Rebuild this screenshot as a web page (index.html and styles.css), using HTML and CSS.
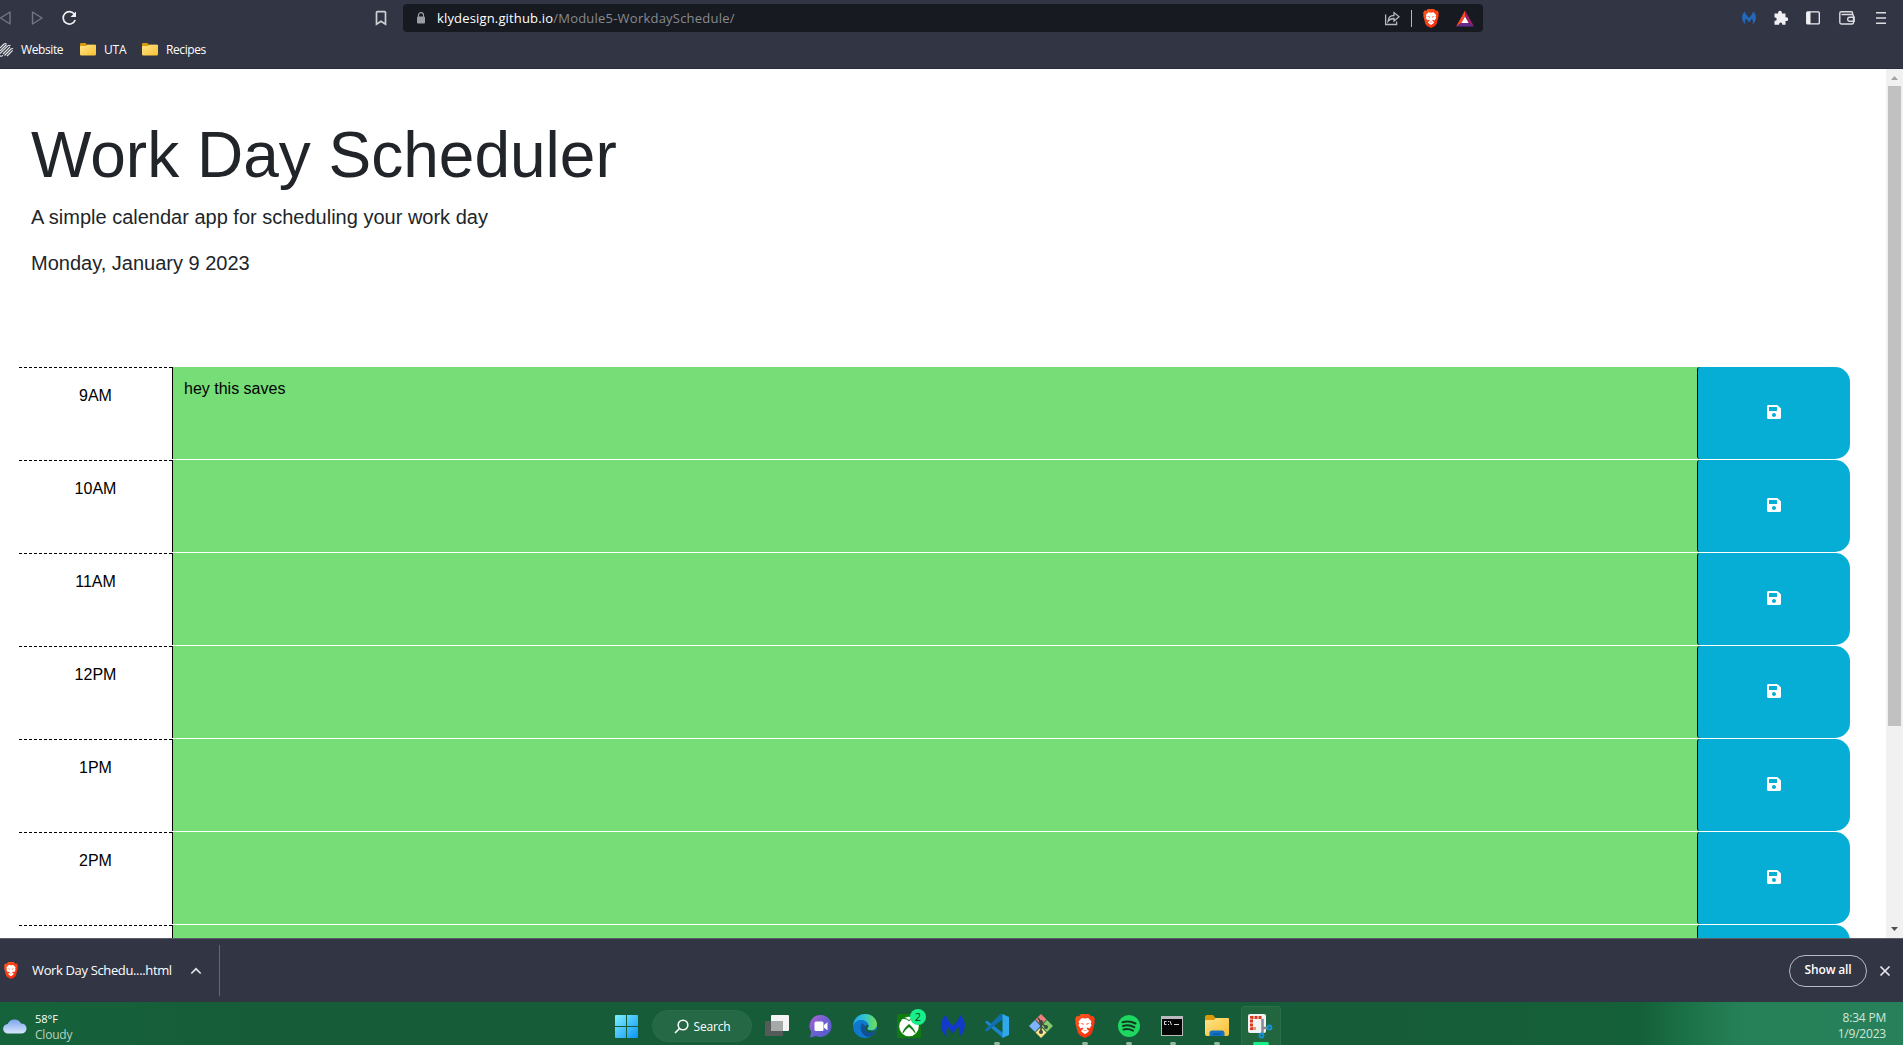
FILE: index.html
```html
<!DOCTYPE html>
<html lang="en">
<head>
<meta charset="utf-8">
<title>Work Day Scheduler</title>
<link rel="stylesheet" href="styles.css">
</head>
<body>
<svg class="defs" width="0" height="0" aria-hidden="true">
  <defs>
    <linearGradient id="win" x1="0" y1="0" x2="1" y2="1"><stop offset="0" stop-color="#7ff0ff"/><stop offset="1" stop-color="#0b93f5"/></linearGradient>
    <linearGradient id="fold" x1="0" y1="0" x2="1" y2="1"><stop offset="0" stop-color="#ffe38a"/><stop offset="1" stop-color="#f9c02f"/></linearGradient>
    <linearGradient id="cloud" x1="0" y1="0" x2="0" y2="1"><stop offset="0" stop-color="#7ba5ee"/><stop offset="1" stop-color="#d9e6fb"/></linearGradient>
    <linearGradient id="chat" x1="0" y1="0" x2="1" y2="1"><stop offset="0" stop-color="#b065cf"/><stop offset=".5" stop-color="#6d60d3"/><stop offset="1" stop-color="#5059c9"/></linearGradient>
    <linearGradient id="edge" x1="0" y1="0" x2="1" y2="0"><stop offset="0" stop-color="#1fa5e8"/><stop offset=".5" stop-color="#35c4cf"/><stop offset="1" stop-color="#73e04a"/></linearGradient>
    <linearGradient id="brv" x1="0" y1="0" x2="1" y2="1"><stop offset="0" stop-color="#ff5a1f"/><stop offset="1" stop-color="#f5260b"/></linearGradient>
  </defs>
  <symbol id="brave" viewBox="0 0 20 24">
    <path fill="url(#brv)" d="M6 0h8l2 2.200 2.200-.2L20 5l-.7 2 .5 1.500-2.800 10.500L15 21.500 10 24l-5-2.500L3 19 .2 8.500.7 7 0 5l1.800-3L4 2.200z"/>
    <path fill="#fff" d="M6.800 4l3.200.6 3.200-.6 3.300 3.500-.7 2.300.8 1.200-2 3.400-2.100-.8-1 1.200 2.300 1.600-.3 1.300L10 20.200l-3.500-2.500-.3-1.300 2.300-1.600-1-1.200-2.100.8L3.400 11l.8-1.200-.7-2.300z"/>
    <path fill="#ff4a15" d="M5.200 8.800l3.600.9-.5 1.200zM14.800 8.800l-3.600.9.500 1.200zM7.600 17l2.400-1.100 2.400 1.100-2.400-.3z"/>
  </symbol>
  <symbol id="em" viewBox="0 0 24 24">
    <path d="M5 1C1.500 3.500-.3 8 .2 13c.5 4.200 2.600 7.700 5.800 9.800C4.800 19.500 5 16 6.800 12.800c1.700 2 3.400 4.200 5.200 6.700 1.800-2.500 3.500-4.700 5.200-6.700 1.800 3.200 2 6.700.8 10 3.200-2.100 5.300-5.600 5.800-9.800.5-5-1.300-9.500-4.800-12-.8 3.800-3.800 8-7 10.800C8.800 9 5.800 4.800 5 1z"/>
  </symbol>
  <symbol id="folder" viewBox="0 0 24 22">
    <path fill="#d99a0b" d="M0 2q0-2 2-2h6l2.500 3H22q2 0 2 2v3H0z"/>
    <path fill="url(#fold)" d="M0 6q0-1 1-1h8l2-2h12q1 0 1 1v15q0 2-2 2H2q-2 0-2-2z"/>
  </symbol>
  <symbol id="save" viewBox="0 0 448 512">
    <path fill="#fff" d="M433.941 129.941l-83.882-83.882A48 48 0 0 0 316.118 32H48C21.490 32 0 53.490 0 80v352c0 26.510 21.490 48 48 48h352c26.510 0 48-21.490 48-48V163.882a48 48 0 0 0-14.059-33.941zM224 416c-35.346 0-64-28.654-64-64s28.654-64 64-64 64 28.654 64 64-28.654 64-64 64zm96-304.520V212c0 6.627-5.373 12-12 12H76c-6.627 0-12-5.373-12-12V108c0-6.627 5.373-12 12-12h228.520c3.183 0 6.235 1.264 8.485 3.515l3.480 3.480A11.996 11.996 0 0 1 320 111.480z"/>
  </symbol>
</svg>

<header class="chrome">
  <div class="toolbar">
    <div class="nav">
      <svg width="12" height="16" viewBox="0 0 12 16" fill="none" stroke="#737784" stroke-width="1.400" stroke-linejoin="round"><path d="M10 2v12L.5 8z"/></svg>
      <svg width="12" height="16" viewBox="0 0 12 16" fill="none" stroke="#737784" stroke-width="1.400" stroke-linejoin="round"><path d="M1.500 2v12L11 8z"/></svg>
      <svg width="16" height="16" viewBox="0 0 16 16" fill="none" stroke="#f0f0f2" stroke-width="1.700"><path d="M12.500 4.300A6.200 6.200 0 1 0 13.200 10"/><path fill="#f0f0f2" stroke="none" d="M14 1.500V7H8.500z"/></svg>
    </div>
    <svg class="mark" width="12" height="16" viewBox="0 0 12 16" fill="none" stroke="#cfd0d4" stroke-width="1.700"><path d="M1.500 2.500q0-.8.800-.8h7.400q.8 0 .8.800v11.600L6 11.300l-4.500 2.800z"/></svg>
    <div class="address">
      <svg width="10" height="12" viewBox="0 0 10 12"><rect x="1" y="4.500" width="8" height="7" rx="1" fill="#9a9ca6"/><path d="M2.500 5V3a2.500 2.300 0 0 1 5 0v2" fill="none" stroke="#9a9ca6" stroke-width="1.200"/></svg>
      <div class="url"><b>klydesign.github.io</b>/Module5-WorkdaySchedule/</div>
      <div class="address-tools">
        <svg width="17" height="16" viewBox="0 0 17 16" fill="none" stroke="#b5b7bd" stroke-width="1.300"><path d="M1.600 4.500v10h11v-3M4 11.500c.2-4.200 2.500-6 6-6V2.600l5 4.200-5 4.200V8.500c-2.800 0-4.500.8-6 3z"/></svg>
        <i class="rule"></i>
        <svg width="16" height="19"><use href="#brave"/></svg>
        <svg class="bat" width="18" height="17" viewBox="0 0 18 17"><path fill="#ff4724" d="M9 .5v6L5.500 13 0 16.500z"/><path fill="#9e1f63" d="M9 .5l9 16-5.500-3.500L9 6.500z"/><path fill="#662d91" d="M0 16.500L5.500 13h7l5.500 3.500z"/><path fill="#fff" d="M9 6.500l3.600 6.500H5.400z"/></svg>
      </div>
    </div>
    <div class="extensions">
      <svg width="14" height="14" fill="#2069bd"><use href="#em"/></svg>
      <svg width="16" height="16" viewBox="0 0 16 16" fill="#f0f0f2"><path d="M1.500 3.500h3.600V2.700a1.900 1.900 0 0 1 3.800 0v.8h3.600v3.800h.8a1.900 1.900 0 0 1 0 3.800h-.8v3.700H9.200v-.9a1.500 1.500 0 0 0-3 0v.9H1.500v-4h.6a1.600 1.600 0 0 0 0-3.200h-.6z"/></svg>
      <svg width="14" height="14" viewBox="0 0 14 14"><rect x=".7" y=".9" width="12.600" height="12" rx="1" fill="none" stroke="#f0f0f2" stroke-width="1.300"/><path fill="#f0f0f2" d="M1 1h3.500v12H1z"/></svg>
      <svg width="16" height="14" viewBox="0 0 16 14" fill="none" stroke="#dcdde0" stroke-width="1.400"><path d="M13.500 3.500V2q0-1.200-1.200-1.200H2.300Q.8.800.8 2.300v9Q.8 13 2.300 13h10.500q1.700 0 1.700-1.500V5q0-1.500-1.500-1.500H2.500M15.200 6.300h-4.500a2 2 0 0 0 0 4h4.500z"/></svg>
      <svg width="10" height="14" viewBox="0 0 10 14" stroke="#dcdde0" stroke-width="1.600"><path d="M0 1.800h10M0 7h10M0 12.200h10"/></svg>
    </div>
  </div>
  <nav class="bookmarks">
    <svg class="squarespace" width="14" height="14" viewBox="0 0 14 14" fill="none" stroke="#e7e7ea" stroke-width="1.100"><path d="M0 5l4-4q1.500-1 2.500.2M0 8l6.500-6.500M0 10.500L8 2.700q1.500-1 2.500 0M3 11l7-7.200M4.500 12.500L11 6q1.200-1 2 0M7 13l5.700-5.700M0 12.800q1.500 1 3-.5"/></svg>
    <span class="bm-web">Website</span>
    <svg width="16" height="13" viewBox="0 0 24 22" preserveAspectRatio="none"><use href="#folder"/></svg>
    <span class="bm-uta">UTA</span>
    <svg width="16" height="13" viewBox="0 0 24 22" preserveAspectRatio="none"><use href="#folder"/></svg>
    <span class="bm-rec">Recipes</span>
  </nav>
</header>

<div class="viewport">
  <main class="page">
    <header class="intro">
      <h1>Work Day Scheduler</h1>
      <p>A simple calendar app for scheduling your work day</p>
      <p>Monday, January 9 2023</p>
    </header>
    <section class="blocks">
      <div class="block"><div class="hour">9AM</div><div class="note">hey this saves</div><button class="save"><svg width="14" height="16"><use href="#save"/></svg></button></div>
      <div class="block"><div class="hour">10AM</div><div class="note"></div><button class="save"><svg width="14" height="16"><use href="#save"/></svg></button></div>
      <div class="block"><div class="hour">11AM</div><div class="note"></div><button class="save"><svg width="14" height="16"><use href="#save"/></svg></button></div>
      <div class="block"><div class="hour">12PM</div><div class="note"></div><button class="save"><svg width="14" height="16"><use href="#save"/></svg></button></div>
      <div class="block"><div class="hour">1PM</div><div class="note"></div><button class="save"><svg width="14" height="16"><use href="#save"/></svg></button></div>
      <div class="block"><div class="hour">2PM</div><div class="note"></div><button class="save"><svg width="14" height="16"><use href="#save"/></svg></button></div>
      <div class="block"><div class="hour"></div><div class="note"></div><button class="save"></button></div>
    </section>
  </main>
  <div class="scrollbar">
    <svg width="17" height="17" viewBox="0 0 17 17"><path fill="#a3a3a3" d="M5 11h7L8.500 7z"/></svg>
    <div class="thumb"></div>
    <svg width="17" height="17" viewBox="0 0 17 17"><path fill="#505050" d="M5 6h7l-3.500 4z"/></svg>
  </div>
</div>

<div class="downloads">
  <svg class="dl-icon" width="14" height="17"><use href="#brave"/></svg>
  <span class="dl-name">Work Day Schedu....html</span>
  <svg width="12" height="8" viewBox="0 0 12 8" fill="none" stroke="#dedfe2" stroke-width="1.700"><path d="M1.300 6.500L6 1.800l4.700 4.700"/></svg>
  <i class="dl-rule"></i>
  <button class="show-all">Show all</button>
  <svg class="close" width="12" height="12" viewBox="0 0 12 12" stroke="#e8e8ea" stroke-width="1.700"><path d="M1.500 1.500l9 9M10.500 1.500l-9 9"/></svg>
</div>

<footer class="taskbar">
  <div class="weather">
    <svg width="24" height="16" viewBox="0 0 24 16"><path fill="url(#cloud)" d="M5 15.500a4.700 4.700 0 0 1-.3-9.400A7.300 7.300 0 0 1 18 5.500a5 5 0 0 1 1 10z"/></svg>
    <div><div class="temp">58°F</div><div class="sky">Cloudy</div></div>
  </div>
  <div class="apps">
    <svg class="start" width="23" height="23" viewBox="0 0 23 23" fill="url(#win)"><path d="M0 1q0-1 1-1h10v11H0zM12 0h10q1 0 1 1v10H12zM0 12h11v11H1q-1 0-1-1zM12 12h11v10q0 1-1 1H12z"/></svg>
    <div class="search"><svg width="15" height="15" viewBox="0 0 15 15" fill="none" stroke="#fff" stroke-width="1.600"><circle cx="9" cy="6" r="4.800"/><path d="M5.500 9.500L1 14"/></svg><span>Search</span></div>
    <div class="app"><svg width="24" height="22" viewBox="0 0 24 22"><path fill="#f4f4f4" d="M7 0h16q1 0 1 1v14q0 1-1 1H6V1q0-1 1-1z"/><path fill="#555b58" d="M0 7q0-1 1-1h17v14q0 1-1 1H1q-1 0-1-1z"/><path fill="#a5a9a7" d="M6 6h12v10H6z"/></svg></div>
    <div class="app"><svg width="24" height="24" viewBox="0 0 24 24"><path fill="url(#chat)" d="M12 1a11 11 0 1 1-5 21L1 23.500 2.300 18A11 11 0 0 1 12 1z"/><rect x="5.500" y="7.500" width="9" height="9.500" rx="1.500" fill="#fff"/><path fill="#fff" d="M15 11l3.500-2.700v8L15 13.700z"/></svg></div>
    <div class="app"><svg width="24" height="24" viewBox="0 0 24 24"><circle cx="12" cy="12" r="12" fill="#0e78ce"/><path fill="#124f95" d="M9 9c-3 5-1 12 6 14 4-.5 7-3 8-6-4 2-11 1-11-5z"/><path fill="url(#edge)" d="M0 11.500C1 4 6 0 12 0c7 0 12 5 12 10.500 0 5-6 7-9.500 5-1-.8 1-1.500 1-4C15.500 8 11.500 6 8 6c-4 0-6.500 2.500-8 5.500z"/><path fill="#165c39" d="M15.500 11.500c0 1.800-1.300 2.700-1.200 3.500 1 1.800 5.700 2.300 8.700.8l-.8 1.800c-4 2.200-11.500 1-10-5.200.8-1.800 2.700-2.300 3.300-.9z"/></svg></div>
    <div class="app"><svg width="24" height="24" viewBox="0 0 24 24"><rect width="24" height="24" rx="1" fill="#107c10"/><circle cx="12" cy="12.500" r="9.800" fill="#fff"/><path fill="#107c10" d="M5 4q3-1 7 2 4-3 7-2l-2 1q-3 0-5 2.200Q10 5 7 5zM12 10c3 2.500 7 7 6.500 10Q16 16 12 13q-4 3-6.500 7C5 17 9 12.500 12 10z"/></svg><b class="badge">2</b></div>
    <div class="app"><svg width="24" height="24" fill="#1239c9"><use href="#em"/></svg></div>
    <div class="app run"><svg width="24" height="24" viewBox="0 0 24 24"><path fill="#1173b8" d="M17.500 0l-13 13.500L.5 17 0 16 15.500 0z"/><path fill="#1b84cd" d="M0 8l2-1.500L18 19v5L0 8.500z"/><path fill="#0f6fb5" d="M0 16l1.800 1.500L18 5V0z"/><path fill="#2fa8ee" d="M17.500 0L24 3v18l-6.500 3z"/></svg></div>
    <div class="app"><svg width="24" height="24" viewBox="0 0 24 24"><path fill="#ef7f7d" d="M12 0l5.500 5.500L12 11 6.500 5.500z"/><path fill="#80b3ff" d="M6 6l5.500 6L6 18l-6-6z"/><path fill="#87c96b" d="M18 6l6 6-6 6-5.500-6z"/><path fill="#ffe08a" d="M12 13l5.500 5.500L12 24l-5.500-5.500z"/><path fill="none" stroke="#3d4b43" stroke-width="1.600" d="M9 4l3 4v11M12 9l5 4"/><g fill="#3d4b43"><circle cx="12" cy="8" r="2"/><circle cx="17" cy="13" r="2"/><circle cx="12" cy="18" r="2"/></g></svg></div>
    <div class="app run"><svg width="20" height="24"><use href="#brave"/></svg></div>
    <div class="app run"><svg width="22" height="22" viewBox="0 0 22 22"><circle cx="11" cy="11" r="11" fill="#1ed760"/><path fill="none" stroke="#123820" stroke-linecap="round" stroke-width="2" d="M4.500 7.300q7-2 13 1.200M5 11q6-1.700 11.300 1.200M5.500 14.500q5-1.300 9.500 1.100"/></svg></div>
    <div class="app run"><svg class="cmd" width="22" height="20" viewBox="0 0 22 20"><rect width="22" height="20" fill="#b8babd"/><rect x="1" y="3" width="20" height="16" fill="#050505"/><path stroke="#ddd" fill="none" d="M5.500 5.500H3.500v3h2M7.500 5v1M7.500 8v1M9 5l1.500 4M13 8.500h5"/></svg></div>
    <div class="app run"><svg width="24" height="22" viewBox="0 0 24 22"><use href="#folder"/><path fill="#1272c4" d="M4.500 21v-3q0-2.500 2.500-2.500h10q2.500 0 2.500 2.500v3z"/><path fill="#0a559f" d="M8 18.500h8v1.200H8z"/></svg></div>
    <div class="app active"><svg width="24" height="24" viewBox="0 0 24 24"><rect width="18" height="19" rx="2" fill="#f2f3f5"/><path fill="none" stroke="#d83b1c" stroke-width="3" stroke-dasharray="3 1" d="M13.500 3.500H3.500v11h4"/><path fill="none" stroke="#868b93" stroke-width="2.500" d="M14.500 5v9h5M14.500 14v5"/><g fill="none" stroke="#1592dc" stroke-width="1.800"><circle cx="21.500" cy="13.500" r="2"/><circle cx="13.500" cy="21.500" r="2"/></g></svg></div>
  </div>
  <div class="clock"><div class="time">8:34 PM</div><div class="date">1/9/2023</div></div>
</footer>
</body>
</html>
```
FILE: styles.css
```css
* { box-sizing: border-box; }
body {
  margin: 0;
  height: 1045px;
  display: flex;
  flex-direction: column;
  overflow: hidden;
  background: #fff;
  font-family: "Open Sans", "Noto Sans", sans-serif;
}
svg { display: block; flex: none; overflow: visible; }
span { white-space: nowrap; }
.defs { position: absolute; }
button { font: inherit; padding: 0; }

/* Browser toolbar */
.chrome { height: 69px; flex: none; background: #323544; color: #fff; border-bottom: 1px solid #2b2d3b; }
.toolbar { height: 36px; display: flex; align-items: center; }
.nav { width: 375px; display: flex; align-items: center; gap: 19px; }
.mark { margin-right: 16px; }
.address { width: 1080px; height: 28px; display: flex; align-items: center; padding: 0 9px 0 13px; background: #171a21; border-radius: 4px; }
.url { margin-left: 11px; font-size: 13px; color: #888a90; white-space: nowrap; letter-spacing: .22px; }
.url b { font-weight: 400; color: #fff; letter-spacing: .16px; }
.address-tools { margin-left: auto; display: flex; align-items: center; }
.rule { width: 1px; height: 17px; margin: 0 11px 0 10px; background: #b5b7bd; }
.bat { margin-left: 17px; }
.extensions { margin: 0 17px 0 auto; display: flex; align-items: center; }
.extensions svg + svg { margin-left: 17px; }
.extensions svg:nth-child(4) { margin-left: 19px; }
.extensions svg:nth-child(5) { margin-left: 21px; }
.bookmarks { height: 27px; display: flex; align-items: center; font-size: 12px; line-height: 15px; }
.squarespace { margin-right: 7px; }
.bookmarks span { display: block; }
.bm-web { width: 59px; letter-spacing: -.4px; }
.bookmarks svg + .bm-uta { margin-left: 8px; width: 38px; letter-spacing: -.15px; }
.bookmarks svg + .bm-rec { margin-left: 8px; letter-spacing: -.4px; }

/* Scheduler page */
.viewport { height: 869px; flex: none; display: flex; overflow: hidden; }
.page { flex: 1; padding: 0 36px 0 19px; font-family: "Liberation Sans", Arial, sans-serif; color: #212529; font-size: 16px; line-height: 24px; }
.intro { height: 298px; padding: 48px 12px 0; }
.intro h1 { margin: 0 0 8px; font-size: 64px; font-weight: 400; line-height: 77px; }
.intro p { margin: 0 0 16px; font-size: 20px; line-height: 30px; }
.block {
  height: 93px;
  display: grid;
  grid-template-columns: 153px 1fr 153px;
  color: #000;
  /* green shows behind the button's rounded left corners */
  background: linear-gradient(#77dd77, #77dd77) right 150px top / 6px 92px no-repeat;
}
.hour { border-top: 1px dashed #000; padding-top: 16px; text-align: center; }
.note { height: 92px; padding: 10px 11px; border-left: 1px solid #000; background: #77dd77; }
.save { height: 92px; display: flex; align-items: center; justify-content: center; padding-bottom: 2px; background: #06aed5; border: 0; border-left: 1px solid #000; border-radius: 3px 15px 15px 3px; }
.scrollbar { width: 17px; background: #f1f1f1; display: flex; flex-direction: column; align-items: center; }
.thumb { width: 13px; height: 640px; margin-bottom: auto; background: #c1c1c1; }

/* Download shelf */
.downloads { height: 64px; flex: none; display: flex; align-items: center; padding: 0 12px 0 4px; background: #323544; border-top: 1px solid #5b5d69; color: #fff; font-size: 13px; }
.dl-name { width: 158px; margin-left: 14px; padding-bottom: 1px; letter-spacing: -.36px; }
.dl-rule { width: 1px; height: 51px; margin-left: 17px; background: #646775; }
.show-all { width: 78px; height: 32px; margin-left: auto; padding-bottom: 2px; border: 1px solid #b9bac3; border-radius: 16px; background: none; color: #fff; font-size: 12px; font-weight: 600; letter-spacing: -.15px; }
.close { margin-left: 12px; }

/* Windows taskbar */
.taskbar { height: 43px; flex: none; display: flex; background: linear-gradient(90deg, #15633b 0, #165c39 250px, #165c39 1400px, #146038 1640px, #1b7147 1685px, #268057 1740px, #27805a 100%); color: #fff; font-size: 12px; }
.weather { width: 615px; display: flex; padding: 9px 0 0 3px; line-height: 16px; gap: 8px; }
.weather svg { margin-top: 7px; }
.temp { font-size: 11px; }
.sky { font-size: 12px; color: #b5d1c0; letter-spacing: -.2px; }
.apps { display: flex; }
.start { margin: 13px 14px 0 0; }
.search { width: 100px; height: 32px; margin: 8px 3px 0 0; border-radius: 16px; border: 1px solid #2a6d4a; background: #246845; display: flex; align-items: center; justify-content: center; gap: 5px; letter-spacing: -.2px; }
.app { width: 44px; height: 43px; padding-top: 5px; display: flex; align-items: center; justify-content: center; position: relative; }
.cmd { margin-right: 2px; }
.badge { position: absolute; left: 23px; top: 7px; width: 16px; height: 16px; border-radius: 50%; background: #17f088; color: #06351c; font-size: 11px; font-weight: 400; line-height: 16px; text-align: center; }
.run::after, .active::after { content: ""; position: absolute; bottom: 0; left: 19px; width: 6px; height: 3px; border-radius: 2px; background: #93b8a4; }
.active { width: 40px; margin: 4px 2px 0; height: 39px; padding: 0 2px 0 0; border-radius: 4px 4px 0 0; border: 1px solid #2b6e4c; border-bottom: 0; background: #22663f; }
.active::after { left: 11px; width: 16px; background: #17f088; }
.clock { margin-left: auto; padding: 8px 17px 0 0; text-align: right; line-height: 16px; font-size: 12px; color: #d2e7dc; letter-spacing: -.2px; }
```
